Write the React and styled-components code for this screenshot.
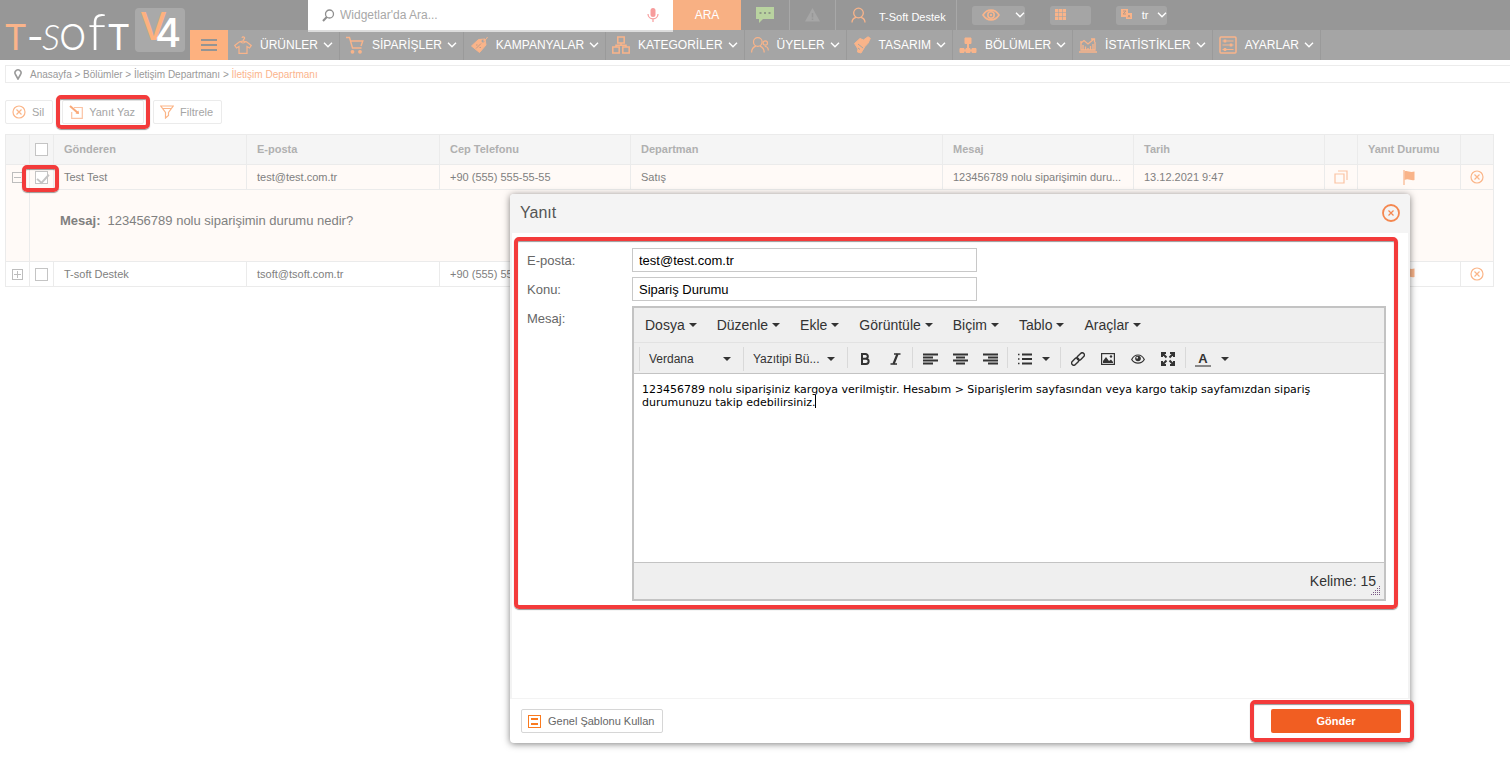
import React, { useState } from "react";
import styled, { createGlobalStyle } from "styled-components";

const menuItems = [
  { label: "ÜRÜNLER", icon: "shirt" },
  { label: "SİPARİŞLER", icon: "cart" },
  { label: "KAMPANYALAR", icon: "tag" },
  { label: "KATEGORİLER", icon: "boxes" },
  { label: "ÜYELER", icon: "users" },
  { label: "TASARIM", icon: "brush" },
  { label: "BÖLÜMLER", icon: "tree" },
  { label: "İSTATİSTİKLER", icon: "stats" },
  { label: "AYARLAR", icon: "sliders" },
];

const columns = [24, 24, 193, 193, 191, null, 191, 191, 33, 103, 33];

const rows = [
  {
    id: 1,
    name: "Test Test",
    mail: "test@test.com.tr",
    phone: "+90 (555) 555-55-55",
    department: "Satış",
    message: "123456789 nolu siparişimin durumu nedir?",
    date: "13.12.2021 9:47",
    open: true,
  },
  {
    id: 2,
    name: "T-soft Destek",
    mail: "tsoft@tsoft.com.tr",
    phone: "+90 (555) 555-55-55",
    department: "Satış",
    message: "",
    date: "",
    open: false,
  },
];

const editorMenus = [
  "Dosya",
  "Düzenle",
  "Ekle",
  "Görüntüle",
  "Biçim",
  "Tablo",
  "Araçlar",
];

const shorten = (text, max = 31) =>
  text.length > max ? `${text.slice(0, max)}...` : text;

const Svg = ({ w = 18, h = 18, color = "#f9b48a", stroke = 1, children }) => (
  <svg
    width={w}
    height={h}
    viewBox={`0 0 ${w} ${h}`}
    fill="none"
    stroke={color}
    strokeWidth={stroke}
    aria-hidden="true"
  >
    {children}
  </svg>
);

const navIcons = {
  shirt: (
    <Svg stroke={1.2}>
      <path d="M8 1.8a1.3 1.3 0 1 1 1.6 1.6L9 5M9 5L5.500 5.800 .8 9.500l1.700 2.500L5 10.500v6.800h8v-6.800l2.500 1.500 1.700-2.500-4.700-3.700z" />
      <path d="M6.500 5.500c1 2 4 2 5 0" />
    </Svg>
  ),
  cart: (
    <Svg stroke={1.4}>
      <path d="M0 1.5h3.5L6.5 12h9M5 5h11.8L15 10" />
      <circle cx="6.500" cy="15.800" r="1.2" fill="#f9b48a" />
      <circle cx="14" cy="15.800" r="1.2" fill="#f9b48a" />
    </Svg>
  ),
  tag: (
    <Svg>
      <path
        d="M1.500 10L8.500 3.500l6.500-.5 1 6L9.500 16.500z"
        fill="#f9b48a"
        strokeLinejoin="round"
      />
      <path d="M6 12.500l5-5M6 9h1.500M9.500 11.500H11" stroke="#c39c86" />
      <circle cx="13" cy="5" r="1.5" fill="#a5a5a5" stroke="none" />
      <path d="M13 5c1 0 3-1 4.500-4" />
    </Svg>
  ),
  boxes: (
    <Svg stroke={1.5}>
      <path d="M5.8 1h6.4v6H5.8zM.8 11h6.4v6H.8zM10.8 11h6.4v6h-6.4zM9 7v2.2M4 11V9.2h10V11" />
    </Svg>
  ),
  users: (
    <Svg stroke={1.2}>
      <circle cx="6.8" cy="6" r="4.3" />
      <path d="M.6 16.5c0-3.4 2-5.6 4.2-6.4M9 10.1c2.2.8 4.2 3 4.2 6.4" />
      <circle cx="14.3" cy="7" r="2.2" />
      <path d="M13.8 10.5c2 0 3.5 1.5 3.5 4" />
    </Svg>
  ),
  brush: (
    <Svg>
      <path
        d="M1.500 7.500L7 2.500l3.500 1.500L15 .8l2.300 1.500-2.300 5L12 10.500l-4 6.500-3.500-1 .5-3z"
        fill="#f9b48a"
        strokeLinejoin="round"
      />
      <path d="M5 8l5 4M5 12l2 1.500" stroke="#a5a5a5" />
    </Svg>
  ),
  tree: (
    <Svg>
      <path d="M6 2h6v5.5H6z" fill="#f9b48a" />
      <path d="M9 7v7M2 14.5h14" strokeWidth={2} />
      <path
        d="M1 12.5h4v4H1zM7 12.5h4v4H7zM13 12.5h4v4h-4z"
        fill="#f9b48a"
      />
    </Svg>
  ),
  stats: (
    <Svg stroke={1.3}>
      <path d="M2 5v9h14V6M0 16h18M4 13.500V9M6.500 13.500v-3M9 13.500V12M11.500 13.500V10M14 13.500V8" />
      <path d="M2 7l3-2.500L9 8l6-5M12 3h3.500v3" />
    </Svg>
  ),
  sliders: (
    <Svg>
      <rect x="1" y="1" width="16" height="16" rx="1" strokeWidth={1.5} />
      <path d="M3.5 5h11M3.5 9h11M3.5 13.5h11" />
      <path d="M6 3.500v3M12 7.500v3M6 12v3" strokeWidth={2.5} />
    </Svg>
  ),
};

const Chevron = () => (
  <Svg w={10} h={6} color="#fff" stroke={1.4}>
    <path d="M1 .8l4 4 4-4" />
  </Svg>
);

const CloseCircle = ({ size = 14, color = "#fbb588", stroke = 1.2 }) => (
  <Svg w={size} h={size} color={color} stroke={stroke}>
    <circle cx={size / 2} cy={size / 2} r={size / 2 - 1} />
    <path
      d={`M${size / 2 - 2.5} ${size / 2 - 2.5}l5 5m0-5l-5 5`}
      strokeWidth={1.2}
    />
  </Svg>
);

const Caret = () => (
  <Svg w={8} h={4} color="none">
    <path d="M0 0h8L4 4z" fill="#333" />
  </Svg>
);

const Flag = () => (
  <Svg w={12} h={15} color="#f9b48a" stroke={1.2}>
    <path d="M1 0v15" />
    <path
      d="M1.5 1.5c3-1.500 5 1.500 10 0V10c-4 1-6-2-10 0z"
      fill="#f9b48a"
      stroke="none"
    />
  </Svg>
);

const alignPaths = {
  left: "M0 1.500h15M0 4.500h10M0 7.500h15M0 10.500h10",
  center: "M0 1.500h15M3 4.500h9M0 7.500h15M3 10.500h9",
  right: "M0 1.500h15M5 4.500h10M0 7.500h15M5 10.500h10",
};

const Align = ({ kind }) => (
  <Svg w={15} h={12} color="#333" stroke={2}>
    <path d={alignPaths[kind]} />
  </Svg>
);

export default function App() {
  const [selected, setSelected] = useState([1]);
  const [mail, setMail] = useState("test@test.com.tr");
  const [subject, setSubject] = useState("Sipariş Durumu");
  const [reply, setReply] = useState(
    "123456789 nolu siparişiniz kargoya verilmiştir. Hesabım > Siparişlerim sayfasından veya kargo takip sayfamızdan sipariş durumunuzu takip edebilirsiniz."
  );

  const toggle = (id) =>
    setSelected((old) =>
      old.includes(id) ? old.filter((x) => x !== id) : [...old, id]
    );

  return (
    <>
      <GlobalStyle />
      <Header>
        <Logo href="#" aria-label="T-Soft V4">
          <svg width="190" height="60" viewBox="0 0 190 60">
            <rect x="135" y="8" width="50" height="44" rx="4" fill="#a9a9a9" />
            <g fontFamily="Inter, sans-serif" fontWeight="300" fill="#fff">
              <text y="50" fontSize="36">
                <tspan x="4" fontWeight="400" fill="#fbb48a">T</tspan>
                <tspan x="27" fontWeight="400">-</tspan>
                <tspan x="42" fontFamily="Lato" fontStyle="italic">S</tspan>
                <tspan x="59">O</tspan>
                <tspan x="88" fontSize="52" fontFamily="Lato">f</tspan>
                <tspan x="107" fontWeight="400">T</tspan>
              </text>
              <text y="40" fontSize="38" fontWeight="500" fill="#fdb17f">
                <tspan x="140">V</tspan>
                <tspan x="155" y="47" fontSize="40" fontWeight="500" fill="#fff">
                  4
                </tspan>
              </text>
            </g>
          </svg>
        </Logo>
        <TopRow>
          <Search>
            <Svg w={13} h={13} color="#8f8f8f" stroke={1.3}>
              <circle cx="7.5" cy="5" r="4" />
              <path d="M4.8 8L1 12" strokeWidth={2} />
            </Svg>
            <SearchInput
              type="search"
              aria-label="Widget ara"
              placeholder="Widgetlar'da Ara..."
            />
            <Svg w={12} h={16} color="#f79c9c" stroke={1.2}>
              <rect
                x="3.5"
                y="1"
                width="5"
                height="9"
                rx="2.5"
                fill="#f79c9c"
                stroke="none"
              />
              <path d="M1 7c0 6.5 10 6.5 10 0M6 12v3" />
            </Svg>
          </Search>
          <SearchButton>ARA</SearchButton>
          <TopCell $width={49} aria-label="Mesajlar">
            <Svg w={18} h={16} color="none">
              <path d="M0 0h18v12H7l-4 4v-4H0z" fill="#b9d3a0" />
              <path
                d="M3.500 6h2M8 6h2M12.500 6h2"
                stroke="#8f9a87"
                strokeWidth={2}
              />
            </Svg>
          </TopCell>
          <TopCell $width={46} aria-label="Uyarılar">
            <Svg w={15} h={14} color="none">
              <path d="M7.500 0L15 13.500H0z" fill="#a6a6a6" />
              <path
                d="M7.500 5v4.500M7.500 10.500v1.500"
                stroke="#979797"
                strokeWidth={1.5}
              />
            </Svg>
          </TopCell>
          <UserCell $width={121}>
            <Svg w={15} h={16} stroke={1.3}>
              <circle cx="7.5" cy="6" r="4.8" />
              <path d="M1 15.500c0-2.500 1.500-4.500 4-5.200M10 10.300c2.500.7 4 2.700 4 5.200" />
            </Svg>
            <UserName>T-Soft Destek</UserName>
          </UserCell>
          <Pills>
            <Pill $width={53} aria-label="Görünüm">
              <Svg w={18} h={12} stroke={1.6}>
                <path d="M1 6c4-6.500 12-6.500 16 0-4 6.500-12 6.500-16 0z" />
                <circle cx="9" cy="6" r="3.200" />
                <circle cx="9" cy="6" r="1.200" fill="#f9b48a" stroke="none" />
              </Svg>
              <Chevron />
            </Pill>
            <Pill $width={41} aria-label="Uygulamalar">
              <Svg w={12} h={12} color="#a5a5a5">
                <rect width="11" height="11" fill="#f9b48a" stroke="none" />
                <path d="M3.500 0v11M7.500 0v11M0 3.500h11M0 7.500h11" strokeWidth=".6" />
              </Svg>
            </Pill>
            <Pill $width={51}>
              <Svg w={12} h={12} color="none">
                <path d="M0 0h7v8H0zM5 4h6v6H5z" fill="#f9b48a" />
                <path
                  d="M2 2h3L2 5h3M7 8.500l1-2.500 1 2.500"
                  stroke="#b89a88"
                />
              </Svg>
              tr
              <Chevron />
            </Pill>
          </Pills>
        </TopRow>
        <Nav>
          <MenuButton aria-label="Menü">
            <Svg w={16} h={14} color="#949494" stroke={2}>
              <path d="M0 2h16M0 7h16M0 12h16" />
            </Svg>
          </MenuButton>
          {menuItems.map((item) => (
            <NavItem key={item.label} href="#">
              {navIcons[item.icon]}
              <span>{item.label}</span>
              <Chevron />
            </NavItem>
          ))}
        </Nav>
      </Header>

      <Page>
        <Breadcrumb aria-label="Konum">
          <Svg w={8} h={12} color="#9a9a9a" stroke={1.6}>
            <path d="M4 11L1.5 6.500a3 3 0 1 1 5 0z" />
          </Svg>
          <div>
            <a href="#">Anasayfa</a> &gt; <a href="#">Bölümler</a> &gt;{" "}
            <a href="#">İletişim Departmanı</a> &gt;{" "}
            <Current>İletişim Departmanı</Current>
          </div>
        </Breadcrumb>

        <Toolbar>
          <ToolButton>
            <CloseCircle />
            Sil
          </ToolButton>
          <Marked $inset="-5px -6px">
            <ToolButton>
              <Svg w={14} h={14} color="#fbc3a3" stroke={1.2}>
                <path d="M5 2.500h8.300v10.800H2.700V7" />
                <path d="M1 1l8 7" stroke="#f9a878" strokeWidth={2} />
                <path
                  d="M10 9L6.500 8.500 9.500 5.500z"
                  fill="#f9a878"
                  stroke="none"
                />
              </Svg>
              Yanıt Yaz
            </ToolButton>
          </Marked>
          <ToolButton>
            <Svg w={14} h={14} color="#fbb588" stroke={1.2}>
              <path d="M.8 1h12.400L8.500 7.500v3l-3 2.500V7.500zM2 3.500h10" />
            </Svg>
            Filtrele
          </ToolButton>
        </Toolbar>

        <Table>
          <colgroup>
            {columns.map((width, i) => (
              <col key={i} width={width || undefined} />
            ))}
          </colgroup>
          <thead>
            <tr>
              <th />
              <IconHead>
                <Check type="checkbox" aria-label="Tümünü seç" />
              </IconHead>
              <th>Gönderen</th>
              <th>E-posta</th>
              <th>Cep Telefonu</th>
              <th>Departman</th>
              <th>Mesaj</th>
              <th>Tarih</th>
              <th />
              <th>Yanıt Durumu</th>
              <th />
            </tr>
          </thead>
          <tbody>
            {rows.map((row) => (
              <React.Fragment key={row.id}>
                <Row $open={row.open}>
                  <IconCell rowSpan={row.open ? 2 : 1} $top={row.open}>
                    <IconButton aria-label={row.open ? "Daralt" : "Genişlet"}>
                      <Svg w={11} h={11} color="#bdbdbd">
                        <rect x=".5" y=".5" width="10" height="10" />
                        <path d={row.open ? "M2 5.500h7" : "M2 5.500h7M5.500 2v7"} />
                      </Svg>
                    </IconButton>
                  </IconCell>
                  <IconCell>
                    {row.open ? (
                      <Marked $inset="-6px -11px -8px -13px">
                        <Check
                          type="checkbox"
                          aria-label={row.name}
                          checked={selected.includes(row.id)}
                          onChange={() => toggle(row.id)}
                        />
                      </Marked>
                    ) : (
                      <Check
                        type="checkbox"
                        aria-label={row.name}
                        checked={selected.includes(row.id)}
                        onChange={() => toggle(row.id)}
                      />
                    )}
                  </IconCell>
                  <td>{row.name}</td>
                  <td>{row.mail}</td>
                  <td>{row.phone}</td>
                  <td>{row.department}</td>
                  <td>{shorten(row.message)}</td>
                  <td>{row.date}</td>
                  <IconCell>
                    <IconButton aria-label="Kopyala">
                      <Svg w={14} h={14} color="#fbc3a3" stroke={1.2}>
                        <path d="M1 4h9v9H1zM4 1h9v9" />
                      </Svg>
                    </IconButton>
                  </IconCell>
                  <IconCell>
                    <Flag />
                  </IconCell>
                  <IconCell>
                    <IconButton aria-label="Sil">
                      <CloseCircle />
                    </IconButton>
                  </IconCell>
                </Row>
                {row.open && (
                  <Row $open>
                    <Detail colSpan={10}>
                      <b>Mesaj:</b>
                      {row.message}
                    </Detail>
                  </Row>
                )}
              </React.Fragment>
            ))}
          </tbody>
        </Table>
      </Page>

      <Modal role="dialog" aria-labelledby="modal-title">
        <ModalHeader>
          <ModalTitle id="modal-title">Yanıt</ModalTitle>
          <IconButton aria-label="Kapat">
            <CloseCircle size={18} color="#f4874f" stroke={1.8} />
          </IconButton>
        </ModalHeader>
        <ModalBody>
          <MarkedForm>
            <Label htmlFor="mail">E-posta:</Label>
            <TextInput
              id="mail"
              value={mail}
              onChange={(e) => setMail(e.target.value)}
            />
            <Label htmlFor="subject">Konu:</Label>
            <TextInput
              id="subject"
              value={subject}
              onChange={(e) => setSubject(e.target.value)}
            />
            <Label htmlFor="reply">Mesaj:</Label>
            <Editor>
              <EditorMenu>
                {editorMenus.map((name) => (
                  <EditorMenuButton key={name} type="button">
                    {name}
                    <Caret />
                  </EditorMenuButton>
                ))}
              </EditorMenu>
              <EditorTools>
                <SelectBox>
                  <select aria-label="Yazıtipi">
                    <option>Verdana</option>
                  </select>
                  <Caret />
                </SelectBox>
                <SelectBox>
                  <select aria-label="Yazıtipi boyutu">
                    <option>Yazıtipi Bü...</option>
                  </select>
                  <Caret />
                </SelectBox>
                <ToolGroup>
                  <Tool type="button" aria-label="Kalın">
                    <Svg w={10} h={12} color="#333" stroke={2}>
                      <path d="M2 1h3.500a2.300 2.300 0 0 1 0 4.700H2zM2 5.700h4a2.600 2.600 0 0 1 0 5.300H2z" />
                    </Svg>
                  </Tool>
                  <Tool type="button" aria-label="İtalik">
                    <Svg w={11} h={12} color="#333" stroke={1.4}>
                      <path d="M4 1h6.500M.5 11H7" />
                      <path d="M7.500 1l-4 10" strokeWidth={2.2} />
                    </Svg>
                  </Tool>
                </ToolGroup>
                <ToolGroup>
                  <Tool type="button" aria-label="Sola hizala">
                    <Align kind="left" />
                  </Tool>
                  <Tool type="button" aria-label="Ortala">
                    <Align kind="center" />
                  </Tool>
                  <Tool type="button" aria-label="Sağa hizala">
                    <Align kind="right" />
                  </Tool>
                </ToolGroup>
                <ToolGroup>
                  <Tool type="button" $wide aria-label="Liste">
                    <Svg w={14} h={12} color="#333" stroke={2}>
                      <path d="M4 1.500h10M4 6h10M4 10.500h10" />
                      <path
                        d="M0 1.500h1.500M0 6h1.500M0 10.500h1.500"
                        strokeWidth={1.5}
                      />
                    </Svg>
                    <Caret />
                  </Tool>
                </ToolGroup>
                <ToolGroup>
                  <Tool type="button" aria-label="Bağlantı">
                    <Svg w={14} h={14} color="#333" stroke={1.4}>
                      <rect
                        x="5.500"
                        y="2.300"
                        width="8.500"
                        height="4.400"
                        rx="2.200"
                        transform="rotate(-45 9.700 4.500)"
                      />
                      <rect
                        x="0"
                        y="7.300"
                        width="8.500"
                        height="4.400"
                        rx="2.200"
                        transform="rotate(-45 4.300 9.500)"
                      />
                    </Svg>
                  </Tool>
                  <Tool type="button" aria-label="Resim">
                    <Svg w={14} h={12} color="#333" stroke={1.2}>
                      <rect x=".6" y=".6" width="12.800" height="10.800" />
                      <path
                        d="M2 10V8l3-4 3 4 2-1.500L12 9v1z"
                        fill="#333"
                        stroke="none"
                      />
                      <circle cx="10" cy="3.500" r="1.200" fill="#333" stroke="none" />
                    </Svg>
                  </Tool>
                  <Tool type="button" aria-label="Önizleme">
                    <Svg w={14} h={10} color="#333" stroke={1.2}>
                      <path d="M.7 5.500c3-6 9.600-6 12.600 0-3 4.800-9.600 4.800-12.600 0z" />
                      <circle cx="7" cy="4.500" r="2.800" fill="#333" stroke="none" />
                      <circle cx="6.200" cy="3.700" r=".9" fill="#eee" stroke="none" />
                    </Svg>
                  </Tool>
                  <Tool type="button" aria-label="Tam ekran">
                    <Svg w={14} h={14} color="#333" stroke={2}>
                      <path d="M1 5V1h4M9 1h4v4M13 9v4H9M5 13H1V9M1.500 1.500l4 4M12.500 1.500l-4 4M12.500 12.500l-4-4M1.500 12.500l4-4" />
                    </Svg>
                  </Tool>
                </ToolGroup>
                <ToolGroup>
                  <Tool type="button" $wide aria-label="Yazı rengi">
                    <ColorLetter>A</ColorLetter>
                    <Caret />
                  </Tool>
                </ToolGroup>
              </EditorTools>
              <EditorArea>
                <textarea
                  id="reply"
                  spellCheck="false"
                  value={reply}
                  onChange={(e) => setReply(e.target.value)}
                />
                <TextCursor />
              </EditorArea>
              <StatusBar>
                Kelime: 15
                <Grip>
                  <Svg w={10} h={10} color="none">
                    {[0, 1, 2, 3, 4].map((r) =>
                      Array.from({ length: r + 1 }, (_, c) => (
                        <rect
                          key={`${r}-${c}`}
                          x={8 - c * 2}
                          y={r * 2}
                          width="1"
                          height="1"
                          fill="#7b5a86"
                        />
                      ))
                    )}
                  </Svg>
                </Grip>
              </StatusBar>
            </Editor>
          </MarkedForm>
        </ModalBody>
        <ModalFooter>
          <TemplateButton type="button">
            <Svg w={13} h={13} color="#fa7a1e">
              <rect x=".5" y=".5" width="12" height="12" />
              <path d="M3 4h7M3 9h7" strokeWidth={2} />
            </Svg>
            Genel Şablonu Kullan
          </TemplateButton>
          <Marked $inset="-9px -13px -9px -21px">
            <SendButton type="submit">Gönder</SendButton>
          </Marked>
        </ModalFooter>
      </Modal>
    </>
  );
}

const GlobalStyle = createGlobalStyle`
  * {
    box-sizing: border-box;
  }
  body {
    margin: 0;
    background: #fff;
    color: #808080;
    font-family: "Liberation Sans", Arial, sans-serif;
    font-size: 11px;
  }
  button, input, select, textarea {
    margin: 0;
    font-family: inherit;
    border-radius: 0;
  }
  button {
    padding: 0;
    border: none;
    background: none;
    cursor: pointer;
  }
  a {
    color: inherit;
    text-decoration: none;
  }
  svg {
    display: block;
    flex-shrink: 0;
  }
`;

const Header = styled.header`
  display: grid;
  grid-template-columns: 190px 1fr;
  grid-template-rows: 30px 30px;
  background: #979797;
`;
const Logo = styled.a`
  grid-row: span 2;
`;
const TopRow = styled.div`
  display: flex;
  padding-left: 118px;
`;
const Search = styled.div`
  display: flex;
  align-items: center;
  gap: 5px;
  width: 365px;
  padding: 0 14px;
  background: #fff;
  box-shadow: 0 2px 0 #dcdcdc;
  z-index: 1;
`;
const SearchInput = styled.input`
  flex: 1;
  min-width: 0;
  padding: 0;
  border: none;
  outline: none;
  background: none;
  font-size: 12px;
  &::placeholder {
    color: #a8a8a8;
  }
`;
const SearchButton = styled.button`
  width: 68px;
  background: #f8b083;
  color: #fff;
  font-size: 12px;
`;
const TopCell = styled.button`
  display: flex;
  align-items: center;
  justify-content: center;
  width: ${(p) => p.$width}px;
  border-right: 1px solid #a8a8a8;
  color: #fff;
`;
const UserCell = styled(TopCell)`
  justify-content: flex-start;
  gap: 13px;
  padding-left: 15px;
`;
const UserName = styled.span`
  padding-top: 4px;
  font-size: 11px;
  white-space: nowrap;
`;
const Pills = styled.div`
  display: flex;
  align-items: center;
  gap: 25px;
  padding-left: 15px;
`;
const Pill = styled.button`
  display: flex;
  align-items: center;
  justify-content: space-between;
  width: ${(p) => p.$width}px;
  height: 19px;
  padding: 0 0 0 5px;
  border-radius: 3px;
  background: #a5a5a5;
  color: #fff;
  font-size: 11px;
  &:first-child {
    padding-left: 10px;
  }
`;
const Nav = styled.nav`
  display: flex;
  background: #a5a5a5;
`;
const MenuButton = styled.button`
  display: flex;
  align-items: center;
  justify-content: center;
  width: 38px;
  background: #fdb17f;
`;
const NavItem = styled.a`
  display: flex;
  align-items: center;
  gap: 5px;
  padding: 0 6px;
  border-right: 1px solid #9a9a9a;
  color: #fff;
  font-size: 12px;
  span {
    padding-left: 3px;
  }
`;

const Page = styled.main`
  padding: 5px 0 0 5px;
`;
const Breadcrumb = styled.nav`
  display: flex;
  align-items: center;
  gap: 8px;
  height: 18px;
  padding-left: 8px;
  border: 1px solid #ececec;
  border-right: none;
  color: #999;
  font-size: 10px;
`;
const Current = styled.span`
  color: #fbb48c;
`;
const Toolbar = styled.div`
  display: flex;
  gap: 9px;
  margin: 17px 0 10px;
`;
const ToolButton = styled.button`
  display: flex;
  align-items: center;
  gap: 6px;
  height: 24px;
  padding: 0 8px 0 6px;
  border: 1px solid #ebebeb;
  border-radius: 2px;
  background: #fff;
  color: #a5a5a5;
  font-size: 11px;
`;

/* red frame drawn round a control */
const Marked = styled.div`
  position: relative;
  width: max-content;
  &::after {
    content: "";
    position: absolute;
    inset: ${(p) => p.$inset};
    border: 4px solid #f33b3b;
    border-radius: 5px;
    box-shadow: 0 1px 1px rgba(0, 0, 0, 0.4), inset 0 1px 1px rgba(0, 0, 0, 0.4);
    pointer-events: none;
    z-index: 2;
  }
`;

const Table = styled.table`
  width: calc(100% - 16px);
  table-layout: fixed;
  border-collapse: separate;
  border-spacing: 0;
  border: 1px solid #ebebeb;
  border-width: 1px 0 0 1px;
  th,
  td {
    padding: 0 10px;
    border: 1px solid #ebebeb;
    border-width: 0 1px 1px 0;
    overflow: hidden;
    text-align: left;
    text-overflow: ellipsis;
    white-space: nowrap;
  }
  th {
    height: 30px;
    padding-bottom: 1px;
    background: #f5f5f5;
    color: #b0b0b0;
  }
  td {
    height: 25px;
  }
`;
const Row = styled.tr`
  background: ${(p) => (p.$open ? "#fffaf7" : "#fff")};
`;
const IconHead = styled.th`
  && {
    padding: 0 5px;
  }
`;
const IconCell = styled.td`
  && {
    padding: ${(p) => (p.$top ? "7px 5px 0" : "0 5px")};
    vertical-align: ${(p) => (p.$top ? "top" : "middle")};
    overflow: visible;
  }
  > svg,
  > button,
  > div {
    margin: 0 auto;
  }
`;
const Check = styled.input`
  appearance: none;
  display: block;
  position: relative;
  width: 13px;
  height: 13px;
  border: 1px solid #c4c4c4;
  background: #fff;
  &:checked::after {
    content: "";
    position: absolute;
    top: 2px;
    left: 1px;
    width: 10px;
    height: 5px;
    border: solid #c4c4c4;
    border-width: 0 0 2px 2px;
    transform: rotate(-48deg);
  }
`;
const IconButton = styled.button`
  display: block;
`;
const Detail = styled.td`
  && {
    height: 72px;
    padding: 23px 30px 0;
    vertical-align: top;
    font-size: 13px;
  }
  b {
    margin-right: 7px;
  }
`;

const Modal = styled.section`
  position: absolute;
  top: 194px;
  right: 100px;
  width: 900px;
  border-radius: 4px;
  background: #fff;
  box-shadow: 0 1px 7px rgba(0, 0, 0, 0.5);
  z-index: 5;
`;
const ModalHeader = styled.header`
  display: flex;
  align-items: center;
  justify-content: space-between;
  height: 39px;
  padding: 0 10px 2px;
  border-radius: 4px 4px 0 0;
  background: #f4f4f4;
`;
const ModalTitle = styled.h2`
  margin: 0;
  color: #555;
  font-size: 16px;
  font-weight: 400;
`;
const ModalBody = styled.div`
  padding: 4px 10px 89px 2px;
  border: 2px solid #f3f3f3;
  border-width: 0 2px 1px;
`;
const MarkedForm = styled.form`
  display: grid;
  grid-template-columns: 105px 1fr;
  gap: 5px 0;
  padding: 7px 8px 4px 9px;
  border: 4px solid #f33b3b;
  border-radius: 5px;
  box-shadow: 0 1px 1px rgba(0, 0, 0, 0.4), inset 0 1px 1px rgba(0, 0, 0, 0.4);
`;
const Label = styled.label`
  padding-top: 1px;
  color: #666;
  font-size: 13px;
  line-height: 23px;
`;
const TextInput = styled.input`
  width: 345px;
  height: 24px;
  padding: 0 6px;
  border: 1px solid #c8c8c8;
  color: #000;
  font-size: 13px;
  outline: none;
`;
const Editor = styled.div`
  border: 2px solid #c3c3c3;
  background: #efefef;
  color: #333;
`;
const EditorMenu = styled.div`
  display: flex;
  height: 35px;
  padding-left: 1px;
  border-bottom: 1px solid #e2e2e2;
`;
const EditorMenuButton = styled.button`
  display: flex;
  align-items: center;
  gap: 4px;
  padding: 0 10px;
  color: #333;
  font-size: 14px;
`;
const EditorTools = styled.div`
  display: flex;
  height: 31px;
  padding: 4px 0 0 5px;
  border-bottom: 1px solid #c3c3c3;
`;
const SelectBox = styled.div`
  display: flex;
  align-items: center;
  width: 104px;
  height: 24px;
  padding: 0 12px 0 9px;
  border-left: 1px solid #d9d9d9;
  select {
    flex: 1;
    min-width: 0;
    padding: 0;
    appearance: none;
    border: none;
    outline: none;
    background: none;
    color: #333;
    font-size: 12px;
  }
`;
const ToolGroup = styled.div`
  display: flex;
  height: 21px;
  padding: 0 2px;
  border-left: 1px solid #d9d9d9;
`;
const Tool = styled.button`
  display: flex;
  align-items: center;
  justify-content: center;
  gap: 10px;
  width: ${(p) => (p.$wide ? 48 : 30)}px;
  height: 24px;
`;
const ColorLetter = styled.span`
  width: 16px;
  border-bottom: 2px solid #888;
  color: #333;
  font-size: 13px;
  font-weight: 700;
  line-height: 13px;
`;
const EditorArea = styled.div`
  position: relative;
  height: 188px;
  background: #fff;
  textarea {
    display: block;
    width: 100%;
    height: 100%;
    padding: 9px 8px;
    border: none;
    outline: none;
    resize: none;
    color: #000;
    font-family: Verdana, "DejaVu Sans", sans-serif;
    font-size: 11px;
    line-height: 13px;
  }
`;
const TextCursor = styled.span`
  position: absolute;
  top: 21px;
  left: 181px;
  width: 1px;
  height: 13px;
  background: #000;
`;
const StatusBar = styled.div`
  position: relative;
  height: 37px;
  padding-right: 8px;
  border-top: 1px solid #c3c3c3;
  font-size: 14px;
  line-height: 36px;
  text-align: right;
`;
const Grip = styled.span`
  position: absolute;
  right: 3px;
  bottom: 3px;
`;
const ModalFooter = styled.footer`
  display: flex;
  align-items: center;
  justify-content: space-between;
  height: 44px;
  padding: 0 9px 0 11px;
`;
const TemplateButton = styled.button`
  display: flex;
  align-items: center;
  gap: 7px;
  height: 24px;
  padding: 0 8px 0 6px;
  border: 1px solid #d6d6d6;
  border-radius: 2px;
  color: #666;
  font-size: 11px;
`;
const SendButton = styled.button`
  width: 130px;
  height: 24px;
  border-radius: 2px;
  background: #f15e22;
  color: #fff;
  font-size: 11px;
  font-weight: 700;
`;
